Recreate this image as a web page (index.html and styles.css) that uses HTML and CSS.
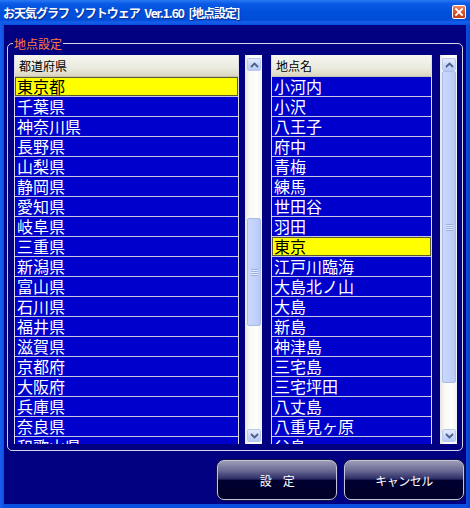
FILE: index.html
```html
<!DOCTYPE html>
<html lang="ja">
<head>
  <meta charset="UTF-8">
  <title>地点設定</title>
  <link rel="stylesheet" href="styles.css">
</head>
<body>
  <div class="window">
    <!-- タイトルバー -->
    <div class="titlebar">
      <span class="title">お天気グラフ ソフトウェア Ver.1.60 [地点設定]</span>
      <span class="close">
        <svg width="8" height="8" viewBox="0 0 8 8"><path d="M1 1L7 7M7 1L1 7" stroke="#fff" stroke-width="1.8" stroke-linecap="square"/></svg>
      </span>
    </div>

    <div class="client">
      <fieldset class="group">
        <legend>地点設定</legend>
        <div class="lists">

          <!-- 都道府県 -->
          <div class="list pref">
            <div class="list-head">都道府県</div>
            <div class="list-body">
              <div class="row selected">東京都</div>
              <div class="row">千葉県</div>
              <div class="row">神奈川県</div>
              <div class="row">長野県</div>
              <div class="row">山梨県</div>
              <div class="row">静岡県</div>
              <div class="row">愛知県</div>
              <div class="row">岐阜県</div>
              <div class="row">三重県</div>
              <div class="row">新潟県</div>
              <div class="row">富山県</div>
              <div class="row">石川県</div>
              <div class="row">福井県</div>
              <div class="row">滋賀県</div>
              <div class="row">京都府</div>
              <div class="row">大阪府</div>
              <div class="row">兵庫県</div>
              <div class="row">奈良県</div>
              <div class="row">和歌山県</div>
            </div>
          </div>
          <div class="scrollbar sb-pref">
            <div class="sb-btn"><svg width="9" height="6" viewBox="0 0 9 6"><path d="M1 5L4.5 1.5L8 5" fill="none" stroke="#4d6185" stroke-width="1.8"/></svg></div>
            <div class="sb-track">
              <div class="sb-thumb" style="margin-top:147px;height:108px"><span class="grip"></span></div>
            </div>
            <div class="sb-btn"><svg width="9" height="6" viewBox="0 0 9 6"><path d="M1 1L4.5 4.5L8 1" fill="none" stroke="#4d6185" stroke-width="1.8"/></svg></div>
          </div>

          <!-- 地点名 -->
          <div class="list point">
            <div class="list-head">地点名</div>
            <div class="list-body">
              <div class="row">小河内</div>
              <div class="row">小沢</div>
              <div class="row">八王子</div>
              <div class="row">府中</div>
              <div class="row">青梅</div>
              <div class="row">練馬</div>
              <div class="row">世田谷</div>
              <div class="row">羽田</div>
              <div class="row selected">東京</div>
              <div class="row">江戸川臨海</div>
              <div class="row">大島北ノ山</div>
              <div class="row">大島</div>
              <div class="row">新島</div>
              <div class="row">神津島</div>
              <div class="row">三宅島</div>
              <div class="row">三宅坪田</div>
              <div class="row">八丈島</div>
              <div class="row">八重見ヶ原</div>
              <div class="row">父島</div>
            </div>
          </div>
          <div class="scrollbar sb-point">
            <div class="sb-btn"><svg width="9" height="6" viewBox="0 0 9 6"><path d="M1 5L4.5 1.5L8 5" fill="none" stroke="#4d6185" stroke-width="1.8"/></svg></div>
            <div class="sb-track">
              <div class="sb-thumb" style="margin-top:0;height:312px"><span class="grip"></span></div>
            </div>
            <div class="sb-btn"><svg width="9" height="6" viewBox="0 0 9 6"><path d="M1 1L4.5 4.5L8 1" fill="none" stroke="#4d6185" stroke-width="1.8"/></svg></div>
          </div>

        </div>
      </fieldset>

      <div class="buttons">
        <button class="btn">設　定</button>
        <button class="btn">キャンセル</button>
      </div>
    </div>
  </div>
</body>
</html>
```

FILE: styles.css
```css
html, body {
  margin: 0;
  padding: 0;
}
body {
  width: 470px;
  height: 508px;
  overflow: hidden;
  font-family: "Noto Sans CJK JP", "Noto Sans", sans-serif;
  background: #0b4fe0;
}
.window {
  width: 470px;
  height: 508px;
  display: flex;
  flex-direction: column;
  background: linear-gradient(to right, #1a5ef0, #1259e8 2px, #0b4fe0 4px, #0b4fe0 466px, #0840c8);
}
.titlebar {
  height: 25px;
  display: flex;
  align-items: center;
  justify-content: space-between;
  padding: 0 3px 1px 3px;
  box-sizing: border-box;
  background: linear-gradient(#2a78f4 0%, #0a5ae6 15%, #0050dc 45%, #004cd6 80%, #1560ea 88%, #0b4fe0 100%);
}
.title {
  color: #fff;
  font-size: 12px;
  font-weight: bold;
  letter-spacing: -1px;
  word-spacing: 3px;
  white-space: pre;
  text-shadow: 1px 1px 0 #0a2e98;
}
.close {
  width: 14px;
  height: 14px;
  box-sizing: border-box;
  border: 1px solid #fff;
  border-radius: 2px;
  background: linear-gradient(#ec8a66, #d9532c 50%, #c43d14);
  display: flex;
  align-items: center;
  justify-content: center;
  margin-right: 1px;
}
.client {
  flex: 1;
  margin: 0 4px 4px 4px;
  background: #000080;
  display: flex;
  flex-direction: column;
}
.group {
  margin: 11px 3px 0 3px;
  padding: 4px 5px 6px 6px;
  border: 1px solid #d4d4e4;
  border-radius: 5px;
  min-width: 0;
}
.group legend {
  color: #ff7a3c;
  font-size: 12px;
  line-height: 15px;
  padding: 0 1px;
  margin-left: -1px;
}
.lists {
  display: flex;
  height: 389px;
}
.list {
  box-sizing: border-box;
  border-left: 1px solid #dcdce8;
  border-right: 1px solid #dcdce8;
  display: flex;
  flex-direction: column;
  overflow: hidden;
}
.pref {
  width: 225px;
}
.point {
  width: 161px;
  margin-left: 9px;
}
.list-head {
  height: 22px;
  flex: none;
  box-sizing: border-box;
  border-bottom: 1px solid #c9c5b2;
  background: linear-gradient(#f6f5ee, #ecebe0 60%, #e2dfcd 85%, #d8d4c0);
  color: #000;
  font-size: 12px;
  line-height: 22px;
  padding-left: 4px;
}
.list-body {
  flex: 1;
  background: #0000cc;
  overflow: hidden;
}
.row {
  height: 20px;
  box-sizing: border-box;
  border-bottom: 1px solid #c8c8dc;
  color: #fff;
  font-size: 16px;
  line-height: 19px;
  padding-left: 2px;
  white-space: nowrap;
}
.row.selected {
  background: #ffff00;
  color: #000;
  box-shadow: inset 0 0 0 1px #5a5a30;
}
.scrollbar {
  width: 17px;
  box-sizing: border-box;
  padding: 3px 1px 2px 2px;
  display: flex;
  flex-direction: column;
  background: linear-gradient(to right, #e6e5de, #f8f8f4 25%, #fefefe 70%, #f2f2ee);
}
.sb-pref {
  margin-left: 6px;
}
.sb-point {
  margin-left: 8px;
}
.sb-btn {
  height: 13px;
  flex: none;
  box-sizing: border-box;
  border: 1px solid #b7c8ee;
  border-radius: 2px;
  background: linear-gradient(#e4ebfd, #c6d5fa 60%, #b9cbf6);
  display: flex;
  align-items: center;
  justify-content: center;
}
.sb-track {
  flex: 1;
  display: flex;
  flex-direction: column;
}
.sb-thumb {
  box-sizing: border-box;
  border: 1px solid #a9bbe8;
  border-radius: 2px;
  background: linear-gradient(to right, #cad8fc, #c3d2fa 50%, #b8c9f4);
  display: flex;
  align-items: center;
  justify-content: center;
}
.grip {
  width: 7px;
  height: 7px;
  background: repeating-linear-gradient(#9aaee0 0, #9aaee0 1px, #e4ebff 1px, #e4ebff 2px);
}
.buttons {
  display: flex;
  justify-content: flex-end;
  gap: 7px;
  margin-top: 9px;
  padding-right: 2px;
}
.btn {
  width: 120px;
  height: 40px;
  box-sizing: border-box;
  border: 1px solid #c4c4d4;
  border-radius: 7px;
  background: linear-gradient(#9c9cb8 0%, #6a6a94 25%, #2a2a64 48%, #000030 50%, #00002a 100%);
  box-shadow: 0 0 0 1px #10104a;
  color: #fff;
  font-family: "Noto Sans CJK JP", "Noto Sans", sans-serif;
  font-size: 12px;
  letter-spacing: -0.5px;
  cursor: pointer;
  padding: 0;
}
```
